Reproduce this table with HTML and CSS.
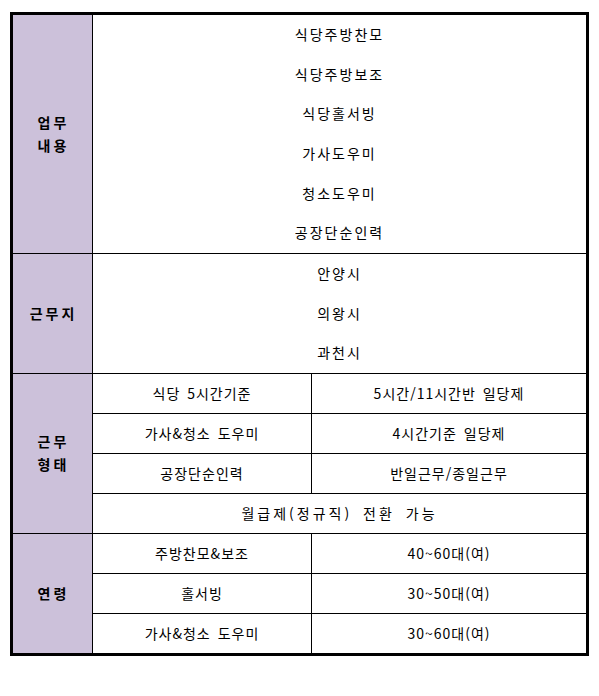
FILE: index.html
```html
<!DOCTYPE html>
<html lang="ko">
<head>
<meta charset="utf-8">
<link rel="stylesheet" href="styles.css">
</head>
<body>
<div class="sheet">
  <div class="group">
    <div class="label">업무<br>내용</div>
    <div class="list">
      <div class="item">식당주방찬모</div>
      <div class="item">식당주방보조</div>
      <div class="item">식당홀서빙</div>
      <div class="item">가사도우미</div>
      <div class="item">청소도우미</div>
      <div class="item">공장단순인력</div>
    </div>
  </div>
  <div class="group">
    <div class="label">근무지</div>
    <div class="list">
      <div class="item">안양시</div>
      <div class="item">의왕시</div>
      <div class="item">과천시</div>
    </div>
  </div>
  <div class="group">
    <div class="label">근무<br>형태</div>
    <div class="rows">
      <div class="cell left">식당 5시간기준</div>
      <div class="cell">5시간/11시간반 일당제</div>
      <div class="cell left">가사&amp;청소 도우미</div>
      <div class="cell">4시간기준 일당제</div>
      <div class="cell left">공장단순인력</div>
      <div class="cell">반일근무/종일근무</div>
      <div class="cell wide last">월급제(정규직) 전환 가능</div>
    </div>
  </div>
  <div class="group">
    <div class="label">연령</div>
    <div class="rows">
      <div class="cell left">주방찬모&amp;보조</div>
      <div class="cell">40~60대(여)</div>
      <div class="cell left">홀서빙</div>
      <div class="cell">30~50대(여)</div>
      <div class="cell left last">가사&amp;청소 도우미</div>
      <div class="cell last">30~60대(여)</div>
    </div>
  </div>
</div>
</body>
</html>
```

FILE: styles.css
```css
html, body {
  margin: 0;
  padding: 0;
  background: #ffffff;
}

body {
  font-family: "Noto Sans CJK KR", "Noto Sans", sans-serif;
  font-size: 14px;
  color: #000000;
}

.sheet {
  margin: 12px 0 0 10px;
  width: 579px;
  box-sizing: border-box;
  border: 3px solid #000000;
}

.group {
  display: grid;
  grid-template-columns: 80px 1fr;
  border-bottom: 1px solid #000000;
}

.group:last-child {
  border-bottom: 0;
}

.label {
  background: #ccc1da;
  border-right: 1px solid #000000;
  display: flex;
  align-items: center;
  justify-content: center;
  text-align: center;
  font-weight: bold;
  font-size: 14px;
  letter-spacing: 3px;
  line-height: 23px;
  padding-left: 2px;
}

.list {
  display: flex;
  flex-direction: column;
}

.item {
  height: 39.67px;
  line-height: 39.67px;
  text-align: center;
  letter-spacing: 2px;
}

.rows {
  display: grid;
  grid-template-columns: 219px 1fr;
}

.cell {
  height: 39px;
  border-bottom: 1px solid #000000;
  display: flex;
  align-items: center;
  justify-content: center;
  letter-spacing: 1px;
  word-spacing: 2px;
}

.cell.left {
  border-right: 1px solid #000000;
}

.cell.wide {
  grid-column: 1 / -1;
  letter-spacing: 3px;
  word-spacing: 4px;
}

.cell.last {
  border-bottom: 0;
}
```
